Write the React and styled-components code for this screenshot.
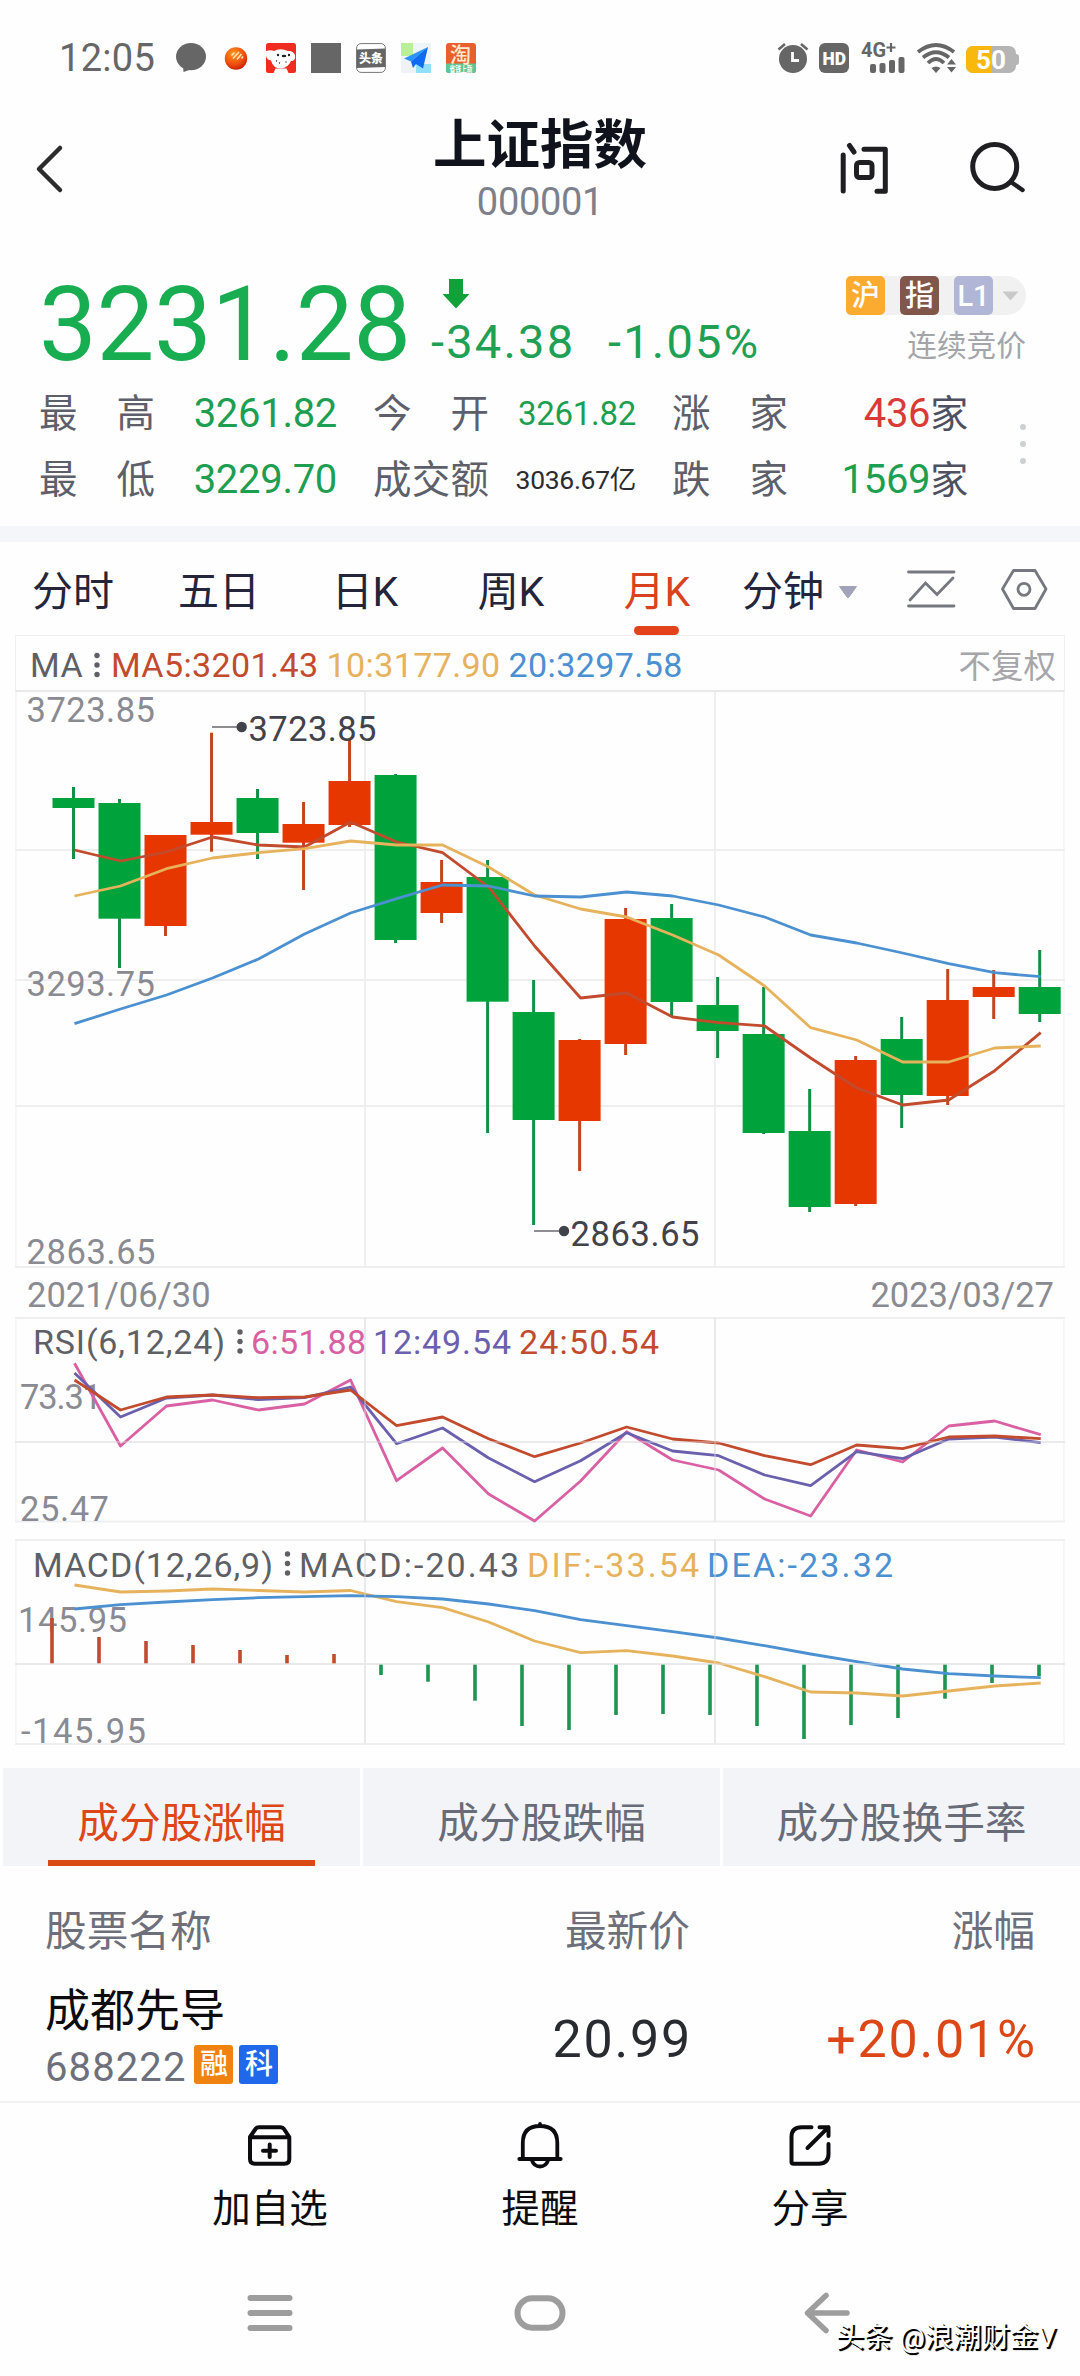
import React from 'react'
import styled, { createGlobalStyle } from 'styled-components'

const RED = '#e73700'
const GREEN = '#00a33b'
const LINE_RED = '#c24a2d'
const LINE_YELLOW = '#e6b25c'
const LINE_BLUE = '#4b90d0'
const LINE_PINK = '#d960a2'
const LINE_PURPLE = '#6a60ae'
const GRID = '#efeff0'

// up, high, body top, body bottom, low
const candles = [
	[0, 787, 798, 808, 859],
	[0, 799, 803, 918.7, 968],
	[1, 835, 835, 926, 936],
	[1, 732.7, 822, 834.7, 851.7],
	[0, 789, 798, 833, 859],
	[1, 802, 824, 842.7, 890],
	[1, 740, 781, 825, 827],
	[0, 774, 775, 940, 943],
	[1, 860, 882, 913, 923],
	[0, 860, 877, 1001.7, 1133],
	[0, 980, 1012, 1120, 1225],
	[1, 1039, 1040, 1121, 1171],
	[1, 908, 919, 1044, 1055],
	[0, 904, 918, 1002, 1016],
	[0, 977, 1005, 1031, 1058],
	[0, 987, 1034, 1133, 1134],
	[0, 1089, 1131, 1207, 1212],
	[1, 1056, 1060, 1204, 1206],
	[0, 1017, 1039, 1095, 1128],
	[1, 969, 1000, 1096, 1105],
	[1, 970, 987, 997, 1019],
	[0, 950, 987, 1014, 1022],
]

const ma5 = [850, 861, 852, 837, 845, 847, 822, 842, 852.7, 887, 946, 998, 993, 1017, 1022.7, 1026, 1058, 1088, 1105, 1100, 1070.7, 1032.7]
const ma10 = [896, 886, 868.7, 858, 852.7, 848.7, 841, 845, 845, 867, 895, 909, 917, 935, 955, 986, 1027.7, 1040, 1062, 1062, 1048, 1046]
const ma20 = [1023.7, 1009, 995, 978, 959, 934, 913, 898.7, 885, 886, 896, 897, 892, 896, 905, 917, 935, 943, 953, 963.7, 972.7, 976.7]

const rsi6 = [1363.3, 1446, 1406, 1400, 1410, 1404, 1380, 1480.7, 1448, 1494, 1521, 1481, 1431.7, 1460, 1470, 1499, 1516, 1450, 1462, 1426, 1421, 1434.7]
const rsi12 = [1373, 1417, 1398, 1395, 1399.7, 1397.7, 1387, 1443.7, 1428, 1458, 1481.7, 1460.7, 1432.7, 1451, 1455.7, 1475, 1485.7, 1451.7, 1458.7, 1439, 1437, 1442.7]
const rsi24 = [1380, 1410, 1397, 1395, 1397.7, 1397, 1390, 1425.7, 1417, 1438.7, 1456.7, 1443, 1427, 1439, 1443, 1455.7, 1464.7, 1445, 1448.7, 1437, 1436, 1438.7]

const macd = [1618, 1637, 1641, 1645, 1650, 1655, 1654, 1675, 1681.7, 1700.7, 1726, 1730, 1715, 1714, 1715, 1726, 1739, 1725, 1718, 1698.7, 1683, 1676]
const dif = [1585, 1592, 1591, 1589, 1590.5, 1592, 1590.5, 1601.7, 1607.7, 1622, 1641, 1652.7, 1650.7, 1656, 1663, 1676.7, 1692, 1693, 1696, 1691, 1686, 1683]
const dea = [1609, 1604.7, 1602, 1599.7, 1597.7, 1596.7, 1595.7, 1596.7, 1599, 1604, 1610.7, 1619.7, 1625.7, 1631.7, 1638, 1645.7, 1654, 1661.7, 1669, 1673.7, 1676, 1677.7]

const candleX = i => 73.5 + i * 46.01

const periods = ['分时', '五日', '日K', '周K', '月K']

const stats = [
	{ label: '最高', value: '3261.82', color: '#1d9e50', size: 40 },
	{ label: '今开', value: '3261.82', color: '#1d9e50', size: 33 },
	{ label: '涨家', value: '436', color: '#d93a36', size: 40, unit: '家' },
	{ label: '最低', value: '3229.70', color: '#1d9e50', size: 40 },
	{ label: '成交额', value: '3036.67亿', color: '#2b2b30', size: 26.5 },
	{ label: '跌家', value: '1569', color: '#1d9e50', size: 40, unit: '家' },
]

const boards = ['成分股涨幅', '成分股跌幅', '成分股换手率']

function Series({ data, color }) {
	return (
		<polyline
			points={data.map((y, i) => candleX(i) + 1 + ',' + y).join(' ')}
			fill="none"
			stroke={color}
			strokeWidth="2.8"
			strokeLinejoin="round"
		/>
	)
}

function Grid({ top, bottom, rows }) {
	return (
		<g stroke={GRID} strokeWidth="2">
			<path d={`M16 ${top}V${bottom}M1064 ${top}V${bottom}`} strokeWidth="1" />
			<path d={`M365 ${top}V${bottom}M715 ${top}V${bottom}`} />
			{rows.map(y => <path key={y} d={`M15 ${y}H1065`} />)}
		</g>
	)
}

// faint copy of the grid that shows through the lines of the lower charts
function GridOver({ top, bottom, row }) {
	return (
		<path
			d={`M365 ${top}V${bottom}M715 ${top}V${bottom}M15 ${row}H1065`}
			stroke="#e4e4e8"
			strokeOpacity="0.5"
			strokeWidth="1.6"
		/>
	)
}

function Dots({ x, y }) {
	return (
		<g fill="#5f6066">
			<circle cx={x} cy={y} r="2.7" />
			<circle cx={x} cy={y + 9.5} r="2.7" />
			<circle cx={x} cy={y + 19} r="2.7" />
		</g>
	)
}

function KLine() {
	return (
		<Chart viewBox="15 692 1050 576" h={576}>
			<Grid top={692} bottom={1268} rows={[850, 980, 1106, 1267]} />
			<Axis x="26.5" y="721.5" textLength="128.5">3723.85</Axis>
			<Axis x="26.5" y="995.5" textLength="128.5">3293.75</Axis>
			<Axis x="26.5" y="1264" textLength="129">2863.65</Axis>
			{candles.map(([up, high, top, bottom, low], i) => (
				<g key={i} fill={up ? RED : GREEN}>
					<rect x={candleX(i) - 1.5} y={high} width="3" height={low - high} fill={up ? '#c2461f' : '#158f45'} />
					<rect x={candleX(i) - 21} y={top} width="42" height={bottom - top} />
				</g>
			))}
			<Series data={ma5} color={LINE_RED} />
			<Series data={ma10} color={LINE_YELLOW} />
			<Series data={ma20} color={LINE_BLUE} />
			<path d="M212 727H240M534 1231H562" stroke="#8d8d92" strokeWidth="2" />
			<circle cx="241.7" cy="727" r="5.2" fill="#42424a" />
			<circle cx="564" cy="1231" r="5.2" fill="#42424a" />
			<Mark x="248.5" y="741" textLength="128">3723.85</Mark>
			<Mark x="570.5" y="1245.5" textLength="129">2863.65</Mark>
		</Chart>
	)
}

function Rsi() {
	return (
		<Chart viewBox="15 1317 1050 206" h={206}>
			<Grid top={1317} bottom={1522} rows={[1318, 1442, 1521.5]} />
			<Axis x="20" y="1409" textLength="82">73.31</Axis>
			<Axis x="20" y="1520.5" textLength="89">25.47</Axis>
			<Note x="33" y="1354" textLength="192">RSI(6,12,24)</Note>
			<Dots x={240} y={1332} />
			<Note x="251" y="1354" textLength="115" fill={LINE_PINK}>6:51.88</Note>
			<Note x="373" y="1354" textLength="138" fill={LINE_PURPLE}>12:49.54</Note>
			<Note x="519" y="1354" textLength="140" fill={LINE_RED}>24:50.54</Note>
			<Series data={rsi6} color={LINE_PINK} />
			<Series data={rsi12} color={LINE_PURPLE} />
			<Series data={rsi24} color={LINE_RED} />
			<GridOver top={1317} bottom={1522} row={1442} />
		</Chart>
	)
}

function Macd() {
	return (
		<Chart viewBox="15 1539 1050 206" h={206}>
			<Grid top={1539} bottom={1744} rows={[1540, 1664, 1744]} />
			<Axis x="18" y="1631.5" textLength="109">145.95</Axis>
			<Axis x="21" y="1743" textLength="125">-145.95</Axis>
			<Note x="33" y="1576.5" textLength="240">MACD(12,26,9)</Note>
			<Dots x={287.5} y={1554} />
			<Note x="299" y="1576.5" textLength="220">MACD:-20.43</Note>
			<Note x="527" y="1576.5" textLength="172" fill={LINE_YELLOW}>DIF:-33.54</Note>
			<Note x="707" y="1576.5" textLength="186" fill={LINE_BLUE}>DEA:-23.32</Note>
			{macd.map((y, i) => (
				<rect
					key={i}
					x={50.2 + i * 47}
					y={y < 1663 ? y : 1664.5}
					width="3.6"
					height={y < 1663 ? 1663.5 - y : y - 1664.5}
					fill={y < 1663 ? LINE_RED : '#1f9552'}
				/>
			))}
			<Series data={dif} color={LINE_YELLOW} />
			<Series data={dea} color={LINE_BLUE} />
			<GridOver top={1539} bottom={1744} row={1664} />
		</Chart>
	)
}

function AppIcons() {
	return (
		<>
			<svg width="30" height="30" viewBox="0 0 30 30" fill="#666">
				<ellipse cx="15" cy="13.6" rx="15" ry="13.6" />
				<path d="M7 24l.6 5L16 26z" />
			</svg>
			<svg width="30" height="30" viewBox="0 0 30 30">
				<defs>
					<radialGradient id="ball" cx=".4" cy=".3" r=".75">
						<stop offset="0" stopColor="#ff9a1c" />
						<stop offset=".6" stopColor="#f2500e" />
						<stop offset="1" stopColor="#c41a08" />
					</radialGradient>
				</defs>
				<circle cx="15" cy="15.5" r="11.2" fill="url(#ball)" />
				<path d="M10.500 12.500l3-3M12 15.500l6-6.500M16 16.500l4.500-5.500M20.500 15.500l1.500-2" stroke="#ffe3b8" strokeWidth="1.6" />
			</svg>
			<svg width="30" height="30" viewBox="0 0 30 30">
				<rect width="30" height="30" rx="2.5" fill="#ee2c20" />
				<path d="M0 8q5-1.500 8 0q6-3.500 14 0q5-.5 7 4q1 6-4 6q-3 7-10 7.500q-8 0-10-8Q1 17 0 13z" fill="#fff" />
				<path d="M9.500 25.500h11l2 4.500h-15z" fill="#fff" />
				<g fill="#222">
					<ellipse cx="18" cy="13" rx="2.3" ry="1.3" />
					<circle cx="12" cy="12" r="1.2" />
					<circle cx="23" cy="12" r="1.2" />
					<circle cx="10.5" cy="18" r=".7" />
					<circle cx="13.5" cy="20" r=".7" />
					<circle cx="20" cy="19" r=".7" />
				</g>
			</svg>
			<svg width="30" height="30" viewBox="0 0 30 30">
				<rect width="30" height="30" fill="#666" />
			</svg>
			<svg width="30" height="30" viewBox="0 0 30 30">
				<rect x=".6" y=".6" width="28.8" height="28.8" rx="4.5" fill="#fff" stroke="#777" />
				<path d="M.6 6.500l28.800-1v18.500l-28.800 1z" fill="#666" />
				<text x="3" y="19.5" fontSize="12" fontWeight="900" fill="#fff">头条</text>
			</svg>
			<svg width="30" height="30" viewBox="0 0 30 30">
				<path d="M0 0h12v13H0z" fill="#b9ee9a" />
				<path d="M12 0h18v21H12z" fill="#eef5f8" />
				<path d="M0 13h15v17H0z" fill="#f0f3f5" />
				<path d="M15 21h15v9H15z" fill="#8fe0fb" />
				<path d="M27 4L3 15.500l7 3z" fill="#2b93ff" />
				<path d="M27 4L10 18.500l2 6.500 3-4 7 4.500z" fill="#0f6bf0" />
			</svg>
			<svg width="30" height="30" viewBox="0 0 30 30">
				<rect width="30" height="30" rx="3" fill="#e8602b" />
				<path d="M0 20.500h30V27a3 3 0 0 1-3 3H3a3 3 0 0 1-3-3z" fill="#5cc795" />
				<text x="4" y="18.5" fontSize="21" fontWeight="500" fill="#ffe9cf">淘</text>
				<text x="3.5" y="28.5" fontSize="8" fontWeight="700" fill="#fff" textLength="23" lengthAdjust="spacingAndGlyphs">省钱上新</text>
			</svg>
		</>
	)
}

function SystemIcons() {
	return (
		<>
			<svg width="32" height="30" viewBox="0 0 32 30">
				<circle cx="16" cy="16" r="14" fill="#666" />
				<path d="M1.500 6.500L8 1M30.500 6.500L24 1" stroke="#666" strokeWidth="2.6" />
				<path d="M15.500 9v8.500H22" fill="none" stroke="#fff" strokeWidth="2.8" />
			</svg>
			<svg width="30" height="30" viewBox="0 0 30 30">
				<rect width="30" height="30" rx="6" fill="#666" />
				<text x="3.5" y="21.5" fontSize="18" fontWeight="900" fill="#fff" textLength="23.5" lengthAdjust="spacingAndGlyphs">HD</text>
			</svg>
			<svg width="46" height="30" viewBox="0 0 46 30" fill="#666">
				<text x="2" y="14" fontSize="19.5" fontWeight="700" textLength="25" lengthAdjust="spacingAndGlyphs">4G</text>
				<path d="M32 0v9M27.500 4.500h9" stroke="#666" strokeWidth="2.2" />
				<rect x="11" y="21" width="6" height="9" rx="2" />
				<rect x="20.5" y="20" width="6" height="10" rx="2" />
				<rect x="30" y="17" width="6" height="13" rx="2" />
				<rect x="39.5" y="14" width="6" height="16" rx="2" />
			</svg>
			<svg width="41" height="30" viewBox="0 0 41 30">
				<g fill="none" stroke="#666" strokeWidth="3.8">
					<path d="M3 9Q21-5 39 9" />
					<path d="M8 14.500Q21 4 34 14.500" />
					<path d="M13 20Q21 12 29 20" />
				</g>
				<path d="M16.500 25q4.500-3 9 0L21 30z" fill="#666" />
				<path d="M32 21.500L36.500 16l4.500 5.500zM32 24l4.500 5.500L41 24z" fill="#666" />
			</svg>
			<Battery>
				<Charge />
				<Percent>50</Percent>
			</Battery>
		</>
	)
}

export default function App() {
	return (
		<Page>
			<GlobalStyle />
			<StatusBar>
				<Time>12:05</Time>
				<IconGroup gap={15}><AppIcons /></IconGroup>
				<IconGroup gap={10} end><SystemIcons /></IconGroup>
			</StatusBar>

			<Header>
				<svg width="30" height="60" viewBox="34 138 30 60" fill="none" stroke="#2c2c2c" strokeWidth="4.5" strokeLinecap="round" strokeLinejoin="round">
					<path d="M60 147L39 168L60 189" />
				</svg>
				<Heading>
					<Title>上证指数</Title>
					<Code>000001</Code>
				</Heading>
				<Actions>
					<svg width="60" height="60" viewBox="834 138 60 60" fill="none" stroke="#1f1f22" strokeWidth="5" strokeLinecap="round" strokeLinejoin="round">
						<path d="M843.200 154V190M849.500 144.500L854 151M864 148.300H885.300V190.200H877" />
						<rect x="856.5" y="161.5" width="15.5" height="15" rx="3" />
					</svg>
					<svg width="60" height="60" viewBox="968 138 60 60" fill="none" stroke="#1f1f22" strokeWidth="5" strokeLinecap="round">
						<circle cx="994.7" cy="165.5" r="22" />
						<path d="M1011 181L1022.500 189" strokeWidth="4.5" />
					</svg>
				</Actions>
			</Header>

			<Quote>
				<PriceRow>
					<Price>3231.28</Price>
					<Change>
						<svg width="28" height="30" viewBox="0 0 28 30">
							<path d="M7 0h14v15h6.500L14 29.500.5 15H7z" fill="#10a13b" />
						</svg>
						<Deltas>
							<span>-34.38</span>
							<span>-1.05%</span>
						</Deltas>
					</Change>
					<Market>
						<Badges>
							<Badge bg="#fbab30">沪</Badge>
							<Badge bg="#80574a">指</Badge>
							<Badge bg="#b1b5d6">L1</Badge>
							<svg width="17" height="10" viewBox="0 0 17 10"><path d="M.5.5h16L8.500 9.500z" fill="#c9c9c9" /></svg>
						</Badges>
						<Session>连续竞价</Session>
					</Market>
				</PriceRow>
				<StatsRow>
					<Stats>
						{stats.map(s => (
							<Stat key={s.label}>
								<Label>{s.label.split('').map(c => <span key={c}>{c}</span>)}</Label>
								<Value color={s.color} size={s.size}>
									{s.value}{s.unit && <Unit>{s.unit}</Unit>}
								</Value>
							</Stat>
						))}
					</Stats>
					<More><i /><i /><i /></More>
				</StatsRow>
			</Quote>

			<Periods>
				{periods.map(p => <Period key={p} active={p === '月K' ? 1 : 0}>{p}</Period>)}
				<Minutes>
					分钟
					<svg width="20" height="12" viewBox="0 0 20 12"><path d="M1.500.5h17L11 11q-1 1-2 0z" fill="#a2a2b8" stroke="#a2a2b8" strokeLinejoin="round" /></svg>
				</Minutes>
				<Tools>
					<svg width="50" height="42" viewBox="906 567 50 42" fill="none" stroke="#77787f" strokeWidth="2.8" strokeLinecap="round">
						<path d="M908.500 571H954M908.500 605H954M910 599L925.500 582L937 593.500L953 577" />
					</svg>
					<svg width="48" height="42" viewBox="1000 567 48 42" fill="none" stroke="#77787f" strokeWidth="2.8" strokeLinejoin="round">
						<path d="M1013.500 569.500H1035L1046 588L1035 607.500H1013.500L1002.500 588Z" />
						<circle cx="1024" cy="588.3" r="6" />
					</svg>
				</Tools>
			</Periods>

			<MaBar>
				<MaItem color="#5f6066">MA</MaItem>
				<svg width="8" height="26" viewBox="0 0 8 26"><Dots x={4} y={3.5} /></svg>
				<MaItem color={LINE_RED}>MA5:3201.43</MaItem>
				<MaItem color={LINE_YELLOW}>10:3177.90</MaItem>
				<MaItem color={LINE_BLUE}>20:3297.58</MaItem>
				<Adjust>不复权</Adjust>
			</MaBar>
			<KLine />
			<Dates>
				<span>2021/06/30</span>
				<span>2023/03/27</span>
			</Dates>
			<Rsi />
			<Gap />
			<Macd />

			<Boards>
				{boards.map((b, i) => <Board key={b} active={i === 0 ? 1 : 0}>{b}</Board>)}
			</Boards>
			<ListHead>
				<span>股票名称</span>
				<span>最新价</span>
				<span>涨幅</span>
			</ListHead>
			<Stock>
				<div>
					<Name>成都先导</Name>
					<Symbol>
						688222
						<Tag bg="#f0820f">融</Tag>
						<Tag bg="#2068ea">科</Tag>
					</Symbol>
				</div>
				<Last>20.99</Last>
				<Last up>+20.01%</Last>
			</Stock>

			<Toolbar>
				<Tool>
					<svg width="48" height="48" viewBox="246 2121 48 48" fill="none" stroke="#0c0c0e" strokeWidth="4" strokeLinecap="round" strokeLinejoin="round">
						<path d="M250 2137L255.500 2129Q256.500 2127.300 259 2127.300H280.500Q283 2127.300 284 2129L289.300 2137V2159Q289.300 2163.800 284.500 2163.800H255Q250 2163.800 250 2159ZM250 2137.300H289.300M269.700 2144.500V2157M263 2150.700H276" />
					</svg>
					加自选
				</Tool>
				<Tool>
					<svg width="48" height="48" viewBox="515.5 2121 48 48" fill="none" stroke="#0c0c0e" strokeWidth="3.8" strokeLinecap="round" strokeLinejoin="round">
						<path d="M522.300 2159V2143Q522.300 2126 539.500 2126Q556.800 2126 556.800 2143V2159M518.800 2159H560.200M531.500 2160.500Q533.500 2166.500 539.500 2166.500Q545.500 2166.500 547.500 2160.500M539.500 2125V2124" />
					</svg>
					提醒
				</Tool>
				<Tool>
					<svg width="48" height="48" viewBox="785.5 2121 48 48" fill="none" stroke="#0c0c0e" strokeWidth="4" strokeLinecap="round" strokeLinejoin="round">
						<path d="M811 2127.200H801Q791 2127.200 791 2137V2162Q791 2163.700 793 2163.700H818Q828 2163.700 828 2154V2144M819 2127.200H828V2136M828 2127.200L807 2148" />
					</svg>
					分享
				</Tool>
			</Toolbar>
			<NavBar>
				<svg width="48" height="44" viewBox="0 0 48 44" stroke="#9d9d9d" strokeWidth="6" strokeLinecap="round">
					<path d="M4.500 7H43.500M4.500 22H43.500M4.500 37H43.500" />
				</svg>
				<svg width="54" height="44" viewBox="0 0 54 44" fill="none" stroke="#9d9d9d" strokeWidth="6">
					<rect x="4.5" y="7.3" width="45" height="29.5" rx="14.75" />
				</svg>
				<BackArrow width="48" height="44" viewBox="0 0 48 44" fill="none" stroke="#9d9d9d" strokeWidth="5.5" strokeLinecap="round" strokeLinejoin="round">
					<path d="M44 22H5M23 4.500L4.500 22L23 39.500" />
				</BackArrow>
			</NavBar>
			<Watermark>头条 @浪潮财金V</Watermark>
		</Page>
	)
}

const GlobalStyle = createGlobalStyle`
	body {
		margin: 0;
		background: #fefefe;
		font-family: Roboto, "Noto Sans CJK SC", sans-serif;
	}

	svg {
		display: block;
		flex: none;
		overflow: visible;
	}
`

const Page = styled.div`
	position: relative;
	display: flex;
	flex-direction: column;
	width: 1080px;
	height: 2376px;
	overflow: hidden;
	background: #fefefe;
`

const StatusBar = styled.div`
	display: flex;
	align-items: center;
	height: 115px;
	padding: 0 60px 0 59px;
	box-sizing: border-box;
`

const Time = styled.div`
	width: 117px;
	font-size: 38px;
	letter-spacing: 0.3px;
	color: #666;
`

const IconGroup = styled.div.withConfig({ shouldForwardProp: p => p !== 'gap' && p !== 'end' })`
	display: flex;
	align-items: center;
	gap: ${props => props.gap}px;
	margin-left: ${props => props.end ? 'auto' : 0};
`

const Battery = styled.div`
	position: relative;
	display: flex;
	width: 50px;
	height: 27px;
	margin: 3px 4px 0 0;
	border-radius: 7px;
	background: #b5b5b5;

	&:after {
		content: '';
		position: absolute;
		left: 50px;
		top: 8px;
		width: 3px;
		height: 11px;
		border-radius: 0 3px 3px 0;
		background: #b5b5b5;
	}
`

const Charge = styled.div`
	width: 26px;
	border-radius: 7px 0 0 7px;
	background: #f9b80d;
`

const Percent = styled.div`
	position: absolute;
	width: 100%;
	text-align: center;
	line-height: 28px;
	font-size: 26px;
	font-weight: 700;
	color: #fff;
`

const Header = styled.div`
	display: flex;
	align-items: center;
	justify-content: space-between;
	height: 107px;
	padding: 0 52px 0 34px;
`

const Heading = styled.div`
	display: flex;
	flex-direction: column;
	align-items: center;
	margin-left: 182px;
	flex: 1;
`

const Title = styled.div`
	line-height: 62px;
	font-size: 53.5px;
	font-weight: 700;
	color: #10131c;
`

const Code = styled.div`
	margin-top: 5px;
	line-height: 40px;
	font-size: 38px;
	letter-spacing: -0.3px;
	color: #7d808a;
`

const Actions = styled.div`
	display: flex;
	gap: 74px;
`

const Quote = styled.div`
	height: 304px;
	padding-top: 53px;
	box-sizing: border-box;
`

const PriceRow = styled.div`
	display: flex;
	align-items: flex-start;
	height: 100px;
	padding: 0 54px 0 39px;
`

const Price = styled.div`
	width: 372px;
	line-height: 100px;
	font-size: 103px;
	letter-spacing: -0.4px;
	color: #17ad50;
`

const Change = styled.div`
	margin-left: 20px;
	padding-top: 4px;

	svg {
		margin-left: 11px;
	}
`

const Deltas = styled.div`
	display: grid;
	grid-template-columns: 177px auto;
	margin-top: 8px;
	line-height: 50px;
	font-size: 47px;
	letter-spacing: 2.2px;
	color: #1fa055;
`

const Market = styled.div`
	display: flex;
	flex-direction: column;
	align-items: flex-end;
	margin-left: auto;
	padding-top: 1px;
`

const Badges = styled.div`
	display: flex;
	align-items: center;
	gap: 15px;
	width: 180px;
	height: 39px;
	border-radius: 6px 20px 20px 6px;
	background: #f1f1f2;

	svg {
		margin-left: -6px;
	}
`

const Badge = styled.div`
	width: 39px;
	height: 39px;
	border-radius: 5px;
	line-height: 41px;
	text-align: center;
	font-size: 29px;
	font-weight: 500;
	color: #fff;
	background: ${props => props.bg};
`

const Session = styled.div`
	margin-top: 13px;
	line-height: 36px;
	font-size: 29.7px;
	color: #a3a5aa;
`

const StatsRow = styled.div`
	display: flex;
	justify-content: space-between;
	margin-top: 6px;
	padding: 0 54px 0 39px;
`

const Stats = styled.div`
	display: grid;
	grid-template-columns: 298px 263px 296px;
	grid-auto-rows: 66px;
	column-gap: 36px;
	line-height: 66px;
`

const Stat = styled.div`
	display: flex;
	justify-content: space-between;
`

const Label = styled.div`
	display: flex;
	justify-content: space-between;
	width: 116px;
	font-size: 38.5px;
	color: #5d606b;
`

const Value = styled.div`
	display: flex;
	font-size: ${props => props.size}px;
	letter-spacing: -0.3px;
	color: ${props => props.color};
`

const Unit = styled.span`
	font-size: 38px;
	color: #4c5060;
`

const More = styled.div`
	display: flex;
	flex-direction: column;
	justify-content: center;
	gap: 11px;
	padding-bottom: 6px;

	i {
		width: 6px;
		height: 6px;
		border-radius: 3px;
		background: #cfd0d2;
	}
`

const Periods = styled.div`
	display: flex;
	height: 109px;
	border-top: 16px solid #f5f6fa;
	box-sizing: border-box;
	line-height: 100px;
	font-size: 41px;
	color: #24253a;
`

const Period = styled.div`
	position: relative;
	width: 146px;
	text-align: center;
	color: ${props => props.active ? '#d8431f' : 'inherit'};

	&:after {
		content: '';
		display: ${props => props.active ? 'block' : 'none'};
		position: absolute;
		left: 50px;
		bottom: 0;
		width: 45px;
		height: 9px;
		border-radius: 5px;
		background: #e2431a;
	}
`

const Minutes = styled.div`
	display: flex;
	align-items: center;
	gap: 14px;
	height: 100px;
	margin-left: 12px;
`

const Tools = styled.div`
	display: flex;
	align-items: center;
	gap: 44px;
	margin-left: auto;
	padding-right: 32px;
`

const MaBar = styled.div`
	display: flex;
	align-items: center;
	gap: 8px;
	height: 57px;
	margin: 0 15px;
	padding: 3px 8px 0 14px;
	box-sizing: border-box;
	border: 1px solid ${GRID};
	border-bottom: 2px solid #e8e9eb;

	svg {
		margin: 0 2px;
	}
`

const MaItem = styled.div`
	font-size: 34px;
	letter-spacing: 0.4px;
	color: ${props => props.color};
`

const Adjust = styled.div`
	margin-left: auto;
	padding-bottom: 3px;
	font-size: 32.5px;
	color: #a6a6aa;
`

const Chart = styled.svg.withConfig({ shouldForwardProp: p => p !== 'h' })`
	width: 1050px;
	height: ${props => props.h}px;
	margin: 0 15px;
	font-size: 34px;
`

const Axis = styled.text`
	font-size: 34.5px;
	fill: #8a8b92;
`

const Mark = styled.text`
	font-size: 34.5px;
	fill: #42424a;
`

const Note = styled.text`
	fill: ${props => props.fill || '#5f6066'};
`

const Dates = styled.div`
	display: flex;
	justify-content: space-between;
	height: 49px;
	padding: 0 26px 0 27px;
	line-height: 55px;
	font-size: 34.5px;
	color: #8a8b92;
`

const Gap = styled.div`
	height: 16px;
`

const Boards = styled.div`
	display: grid;
	grid-template-columns: repeat(3, 357px);
	gap: 3px;
	margin-top: 23px;
	padding-left: 3px;
`

const Board = styled.div`
	position: relative;
	height: 98px;
	line-height: 111px;
	text-align: center;
	font-size: 41.7px;
	background: #f3f4f8;
	color: ${props => props.active ? '#dd4717' : '#686b78'};

	&:after {
		content: '';
		display: ${props => props.active ? 'block' : 'none'};
		position: absolute;
		left: 45px;
		bottom: 0;
		width: 267px;
		height: 6px;
		background: #d94a16;
	}
`

const ListHead = styled.div`
	display: grid;
	grid-template-columns: 345px 300px 345px;
	padding: 41px 45px 0;
	line-height: 50px;
	font-size: 41.7px;
	color: #6d707b;

	span + span {
		text-align: right;
	}
`

const Stock = styled.div`
	display: grid;
	grid-template-columns: 345px 300px 345px;
	height: 114px;
	margin-top: 30px;
	padding: 0 45px;
`

const Name = styled.div`
	line-height: 50px;
	font-size: 45px;
	color: #0c0c0e;
`

const Symbol = styled.div`
	display: flex;
	margin-top: 8px;
	line-height: 45px;
	font-size: 40px;
	letter-spacing: 1.1px;
	color: #6d707b;
`

const Tag = styled.div`
	width: 39px;
	height: 39px;
	margin-left: 6px;
	border-radius: 3px;
	line-height: 40px;
	text-align: center;
	font-size: 28px;
	letter-spacing: 0;
	font-weight: 500;
	color: #fff;
	background: ${props => props.bg};

	&:first-child {
		margin-left: 8px;
	}
`

const Last = styled.div.withConfig({ shouldForwardProp: p => p !== 'up' })`
	margin-top: 22px;
	margin-right: -2px;
	line-height: 61px;
	text-align: right;
	font-size: 52px;
	letter-spacing: 1.8px;
	color: ${props => props.up ? '#dc4717' : '#2a2b31'};
`

const Toolbar = styled.div`
	display: flex;
	height: 131px;
	padding: 18px 135px 0;
	box-sizing: border-box;
	border-top: 2px solid #f1f1f3;
`

const Tool = styled.div`
	display: flex;
	flex-direction: column;
	align-items: center;
	gap: 17px;
	width: 270px;
	line-height: 46px;
	font-size: 38.5px;
	color: #0c0c0e;
`

const NavBar = styled.div`
	display: grid;
	grid-template-columns: repeat(3, 270px);
	justify-items: center;
	padding: 59px 135px 0;
`

const BackArrow = styled.svg`
	margin-left: 33px;
`

const Watermark = styled.div`
	position: absolute;
	right: 24px;
	bottom: 20px;
	line-height: 36px;
	font-size: 28.3px;
	color: #fff;
	text-shadow: 1.5px 1.5px 0 #000, 2px 2px 1px #000;
`
